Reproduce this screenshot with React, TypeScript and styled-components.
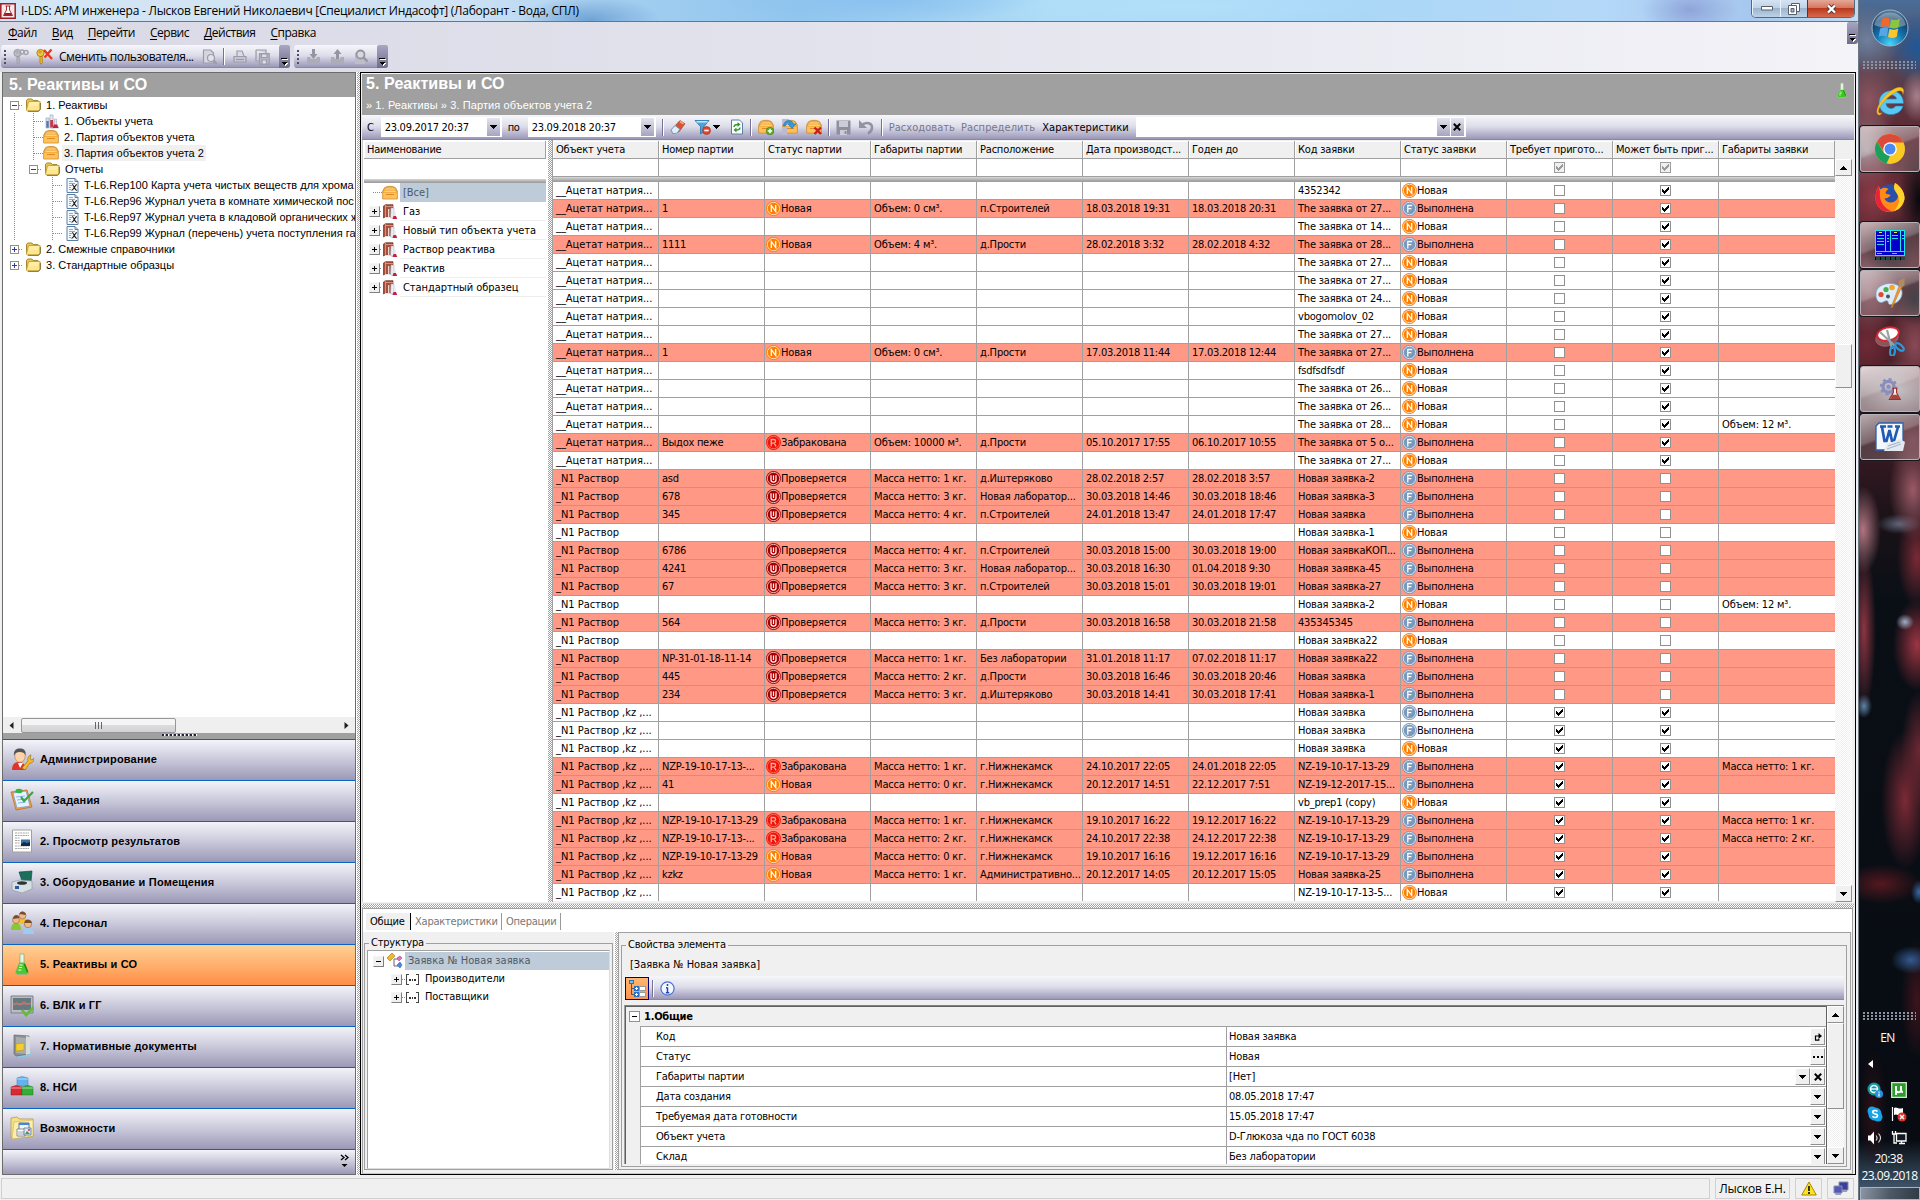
import React from "react";
import styled, { createGlobalStyle, css } from "styled-components";

const tahoma = `"DejaVu Sans Condensed", "DejaVu Sans", sans-serif`;
const sans = `"Liberation Sans", Arial, sans-serif`;
const segoe = `"Open Sans", "Noto Sans", sans-serif`;
const strip = "linear-gradient(#f6f6fb 0%, #dedeea 45%, #c3c2d7 65%, #9c99b8 95%, #7c7c94 100%)";
const checker = "repeating-conic-gradient(#a3a3a3 0 25%, #fff 0 50%) 0 0 / 2px 2px";

const Global = createGlobalStyle`
  html, body { margin: 0; padding: 0; background: #0a0f16; }
  * { box-sizing: border-box; }
  svg { display: block; flex: none; }
`;

const Desktop = styled.div`
  display: flex;
  width: 1920px;
  height: 1200px;
  overflow: hidden;
  font: 11px ${tahoma};
  font-stretch: condensed;
  letter-spacing: -0.26px;
  color: #000;
  white-space: nowrap;
  cursor: default;
`;
const Window = styled.div`
  display: flex;
  flex-direction: column;
  width: 1858px;
  height: 1200px;
  background: #f0f0f0;
`;

/* ---------- title, menu, tool strips ---------- */
const TitleBar = styled.header`
  display: flex;
  align-items: center;
  justify-content: space-between;
  height: 22px;
  padding-right: 3px;
  background:
    radial-gradient(ellipse 70px 24px at 590px 20px, #6fa3d6, transparent 100%),
    radial-gradient(ellipse 50px 26px at 1690px 10px, #8fa5da, transparent 100%),
    radial-gradient(ellipse 160px 24px at 880px 0, #8ac1ef, transparent 100%),
    radial-gradient(ellipse 200px 26px at 1180px 6px, #b2e0fa, transparent 100%),
    linear-gradient(90deg, #d4e6f5 0, #cfe2f4 460px, #a0cdf0 640px, #92c6ee 800px, #aedcf7 1050px, #a9d7f7 1300px, #b4d8f8 1600px, #a7c8ee 1750px, #c0dcf3 1858px);
  border-bottom: 1px solid #5b7a92;
`;
const TitleText = styled.div`
  display: flex;
  align-items: center;
  gap: 5px;
  height: 21px;
  font: 12px ${segoe};
  letter-spacing: -0.25px;
`;
const CaptionButtons = styled.div`
  display: flex;
  align-self: flex-start;
  height: 18px;
  border: 1px solid #53687c;
  border-top: 0;
  border-radius: 0 0 5px 5px;
  overflow: hidden;
`;
const CaptionButton = styled.div<{ $w: number; $close?: boolean }>`
  display: flex;
  align-items: center;
  justify-content: center;
  width: ${(p) => p.$w}px;
  border-left: 1px solid ${(p) => (p.$close ? "#6d2c2c" : "#e9f3fb")};
  background: ${(p) =>
    p.$close
      ? "linear-gradient(#e4a897 0, #d5775f 45%, #b93a1e 50%, #d8694c 100%)"
      : "linear-gradient(#d5e4f3 0, #c0d2e6 45%, #9cb4cd 50%, #bcd2e8 100%)"};
`;
const MenuBar = styled.nav`
  display: flex;
  justify-content: space-between;
  height: 22px;
  background: linear-gradient(90deg, #d9d9e6, #e4e4ee 50%, #f3f3f8);
`;
const MenuItems = styled.div`
  display: flex;
  gap: 15px;
  padding: 2px 0 0 8px;
  font: 12px/18px ${segoe};
  letter-spacing: -0.47px;
`;
const Accel = styled.span`
  text-decoration: underline;
  text-underline-offset: 2px;
`;
const Overflow = styled.div<{ $h?: number }>`
  display: flex;
  align-items: flex-end;
  justify-content: center;
  width: 11px;
  height: ${(p) => p.$h ?? 23}px;
  margin-left: auto;
  padding-bottom: 2px;
  border-radius: 2px 2px 3px 0;
  background: linear-gradient(#a9a6c2, #6f6c8e);
`;
const StripRow = styled.div`
  display: flex;
  gap: 4px;
  height: 28px;
  padding: 1px 0 0 1px;
  background: linear-gradient(90deg, #d9d9e6, #e4e4ee 50%, #f3f3f8);
`;
const Strip = styled.div<{ $w: number }>`
  display: flex;
  flex: none;
  align-items: center;
  width: ${(p) => p.$w}px;
  height: 23px;
  border-radius: 3px;
  background: ${strip};
`;
const Grip = styled.i`
  width: 2px;
  height: 14px;
  margin: 0 7px 0 3px;
  background: repeating-linear-gradient(#4e4c68 0 2px, transparent 2px 4px);
`;
const StripLabel = styled.span`
  margin: 0 8px 0 6px;
  font: 12px ${segoe};
  letter-spacing: -0.44px;
`;
const Divider = styled.i<{ $l?: number; $r?: number }>`
  width: 2px;
  height: 17px;
  margin: 0 ${(p) => p.$r ?? 6}px 0 ${(p) => p.$l ?? 6}px;
  border-left: 1px solid #73719a;
  border-right: 1px solid #fff;
`;
const Gap = styled.i<{ $w: number }>`
  flex: none;
  width: ${(p) => p.$w}px;
`;

/* ---------- left panel ---------- */
const Body = styled.main`
  display: flex;
  height: 1103px;
  padding-left: 2px;
`;
const LeftPanel = styled.aside`
  display: flex;
  flex-direction: column;
  width: 354px;
  height: 1103px;
  border: 1px solid #6b6b6b;
  background: #fff;
`;
const PanelTitle = styled.h1`
  margin: 0;
  height: 24px;
  padding-left: 6px;
  font: bold 16px/23px ${sans};
  letter-spacing: 0.05px;
  color: #fff;
  background: #a0a0a0;
`;
const NavTree = styled.div`
  height: 620px;
  overflow: hidden;
  font-family: ${sans};
  letter-spacing: 0.02px;
`;
const NavRow = styled.div<{ $indent: number }>`
  display: flex;
  align-items: center;
  height: 16px;
  padding-left: ${(p) => p.$indent}px;
`;
const NavLabel = styled.span<{ $on?: boolean }>`
  flex: 0 1 auto;
  min-width: 0;
  margin-left: 3px;
  padding: 0 2px;
  line-height: 16px;
  overflow: hidden;
  ${(p) => p.$on && css`background: #f0f0f0;`}
`;
const Expander = styled.i<{ $classic?: boolean }>`
  position: relative;
  flex: none;
  width: ${(p) => (p.$classic ? 11 : 9)}px;
  height: ${(p) => (p.$classic ? 11 : 9)}px;
  display: grid;
  place-items: center;
  background: ${(p) => (p.$classic ? "#f0f0f0" : "#fff")};
  border: 1px solid ${(p) => (p.$classic ? "#f4f4f4" : "#919191")};
  ${(p) => p.$classic && css`border-right-color: #808080; border-bottom-color: #808080;`}
`;
const Dash = styled.i<{ $w: number }>`
  flex: none;
  width: ${(p) => p.$w}px;
  height: 1px;
  background: repeating-linear-gradient(90deg, #8a8a8a 0 1px, transparent 1px 2px);
`;
const Rail = styled.i<{ $gap: number; $on?: boolean }>`
  flex: none;
  align-self: stretch;
  width: 1px;
  margin-right: ${(p) => p.$gap}px;
  background: ${(p) => (p.$on === false ? "none" : "repeating-linear-gradient(#8a8a8a 0 1px, transparent 1px 2px)")};
`;
const HScroll = styled.div`
  display: flex;
  align-items: center;
  height: 16px;
  padding: 0 6px;
  background: #efefef;
`;
const HThumb = styled.div`
  display: flex;
  align-items: center;
  justify-content: center;
  gap: 2px;
  width: 155px;
  height: 15px;
  margin: 0 auto 0 7px;
  border: 1px solid #979797;
  border-radius: 2px;
  background: linear-gradient(#f5f5f5 0 45%, #dcdcde 50%, #d2d2d4);
  i { width: 1px; height: 7px; background: #666; }
`;
const NavSplit = styled.div`
  display: flex;
  justify-content: center;
  height: 6px;
  padding-top: 1px;
  background: #a0a0a0;
  i { width: 35px; height: 2px; background: repeating-linear-gradient(90deg, #22243f 0 2px, #fff 2px 3px, transparent 3px 4px); }
`;
const NavButton = styled.div<{ $on?: boolean; $h?: number }>`
  display: flex;
  align-items: center;
  gap: 6px;
  height: ${(p) => p.$h ?? 41}px;
  padding: 0 7px 2px;
  border-top: 1px solid #0a62c4;
  font: bold 11px ${sans};
  letter-spacing: 0.18px;
  background: ${(p) => (p.$on ? "linear-gradient(#ffd194, #ff8e48)" : "linear-gradient(#f3f3f9, #c9c8da 50%, #9b98b6)")};
`;

/* ---------- main panel ---------- */
const VSplit = styled.i<{ $w: number }>`
  flex: none;
  width: ${(p) => p.$w}px;
  background: ${checker};
  border-left: 1px solid #fff;
`;
const MainPanel = styled.section`
  display: flex;
  flex-direction: column;
  width: 1496px;
  height: 1103px;
  padding: 1px 1px 0;
  border: 1px solid #000;
  background: #f0f0f0;
`;
const Banner = styled.div`
  display: flex;
  justify-content: space-between;
  height: 41px;
  padding: 0 7px 0 4px;
  color: #fff;
  background: #a0a0a0;
  h1 { margin: 0; font: bold 16px/19px ${sans}; letter-spacing: 0.08px; }
  p { margin: 0; font: 11px/25px ${sans}; letter-spacing: 0.1px; }
`;
const FilterBar = styled.div`
  display: flex;
  align-items: center;
  height: 25px;
  padding: 0 0 1px 5px;
  background: ${strip};
`;
const Combo = styled.div<{ $w: number }>`
  display: flex;
  align-items: center;
  width: ${(p) => p.$w}px;
  height: 20px;
  padding: 0 2px 0 4px;
  background: #fff;
`;
const DropBtn = styled.i<{ $first?: boolean }>`
  display: grid;
  place-items: center;
  width: 13px;
  height: 18px;
  margin-left: ${(p) => (p.$first ? "auto" : "1px")};
  background: linear-gradient(#e4e4ee, #a5a3bf);
`;
const Command = styled.span<{ $off?: boolean }>`
  letter-spacing: 0.05px;
  color: ${(p) => (p.$off ? "#77768c" : "#000")};
`;
const Upper = styled.div`
  display: flex;
  height: 762px;
`;
const NameGrid = styled.div`
  display: flex;
  flex-direction: column;
  width: 185px;
  padding: 1px 1px 0 1px;
  background: #fff;
  border-left: 1px solid #c8c8c8;
`;
const HeadCell = styled.div`
  height: 18px;
  padding-left: 3px;
  line-height: 18px;
  letter-spacing: -0.2px;
  overflow: hidden;
  background: #f0f0f0;
  border-bottom: 1px solid #a0a0a0;
  border-right: 1px solid #a0a0a0;
  box-shadow: inset 1px 1px 0 #fff;
`;
const Band = styled.div<{ $h: number }>`
  height: ${(p) => p.$h}px;
  background: linear-gradient(#d8d8d8, #a0a0a0 80%, #a0a0a0);
`;
const NameRow = styled.div`
  display: flex;
  align-items: center;
  height: 19px;
  padding-left: 5px;
`;
const NameLabel = styled.span<{ $on?: boolean }>`
  flex: 1;
  height: 19px;
  margin-left: 2px;
  padding-left: 3px;
  line-height: 19px;
  letter-spacing: -0.06px;
  border-bottom: 1px solid #eee;
  ${(p) => p.$on && css`background: #becbd9; color: #4c5a68; border-color: #becbd9;`}
`;
const Grid = styled.div`
  display: flex;
  width: 1302px;
  padding-top: 1px;
  border-left: 1px solid #a0a0a0;
  background: #f0f0f0;
`;
const GridBody = styled.div`
  width: 1282px;
  height: 760px;
  overflow: hidden;
  background: #fff;
`;
const Row = styled.div<{ $red?: boolean }>`
  display: grid;
  grid-template-columns: repeat(11, 106px) 116px;
  height: 18px;
  background: ${(p) => (p.$red ? "#ff9884" : "#fff")};
`;
const Cell = styled.div<{ $center?: boolean; $icon?: boolean; $last?: boolean; $track?: number }>`
  display: flex;
  align-items: center;
  justify-content: ${(p) => (p.$center ? "center" : "flex-start")};
  padding-left: ${(p) => (p.$center ? 0 : p.$icon ? 1 : 3)}px;
  line-height: 16px;
  letter-spacing: ${(p) => p.$track ?? -0.2}px;
  overflow: hidden;
  border-bottom: 1px solid #a0a0a0;
  border-right: ${(p) => (p.$last ? 0 : 1)}px solid #a0a0a0;
`;
const Check = styled.i<{ $off?: boolean }>`
  display: grid;
  place-items: center;
  width: 11px;
  height: 11px;
  border: 1px solid ${(p) => (p.$off ? "#9d9d9d" : "#909090")};
  background: ${(p) => (p.$off ? "#f0f0f0" : "#fff")};
`;
const ScrollCol = styled.div<{ $top: number }>`
  display: flex;
  flex-direction: column;
  width: 17px;
  margin-top: ${(p) => p.$top}px;
  background: repeating-conic-gradient(#f0f0f0 0 25%, #fff 0 50%) 0 0 / 2px 2px;
`;
const ScrollBtn = styled.i<{ $h?: number; $mt?: number }>`
  display: grid;
  place-items: center;
  flex: none;
  height: ${(p) => p.$h ?? 17}px;
  margin-top: ${(p) => (p.$mt === undefined ? 0 : p.$mt < 0 ? "auto" : p.$mt + "px")};
  background: #f0f0f0;
  border: 1px solid #fff;
  border-right-color: #909090;
  border-bottom-color: #909090;
`;
const HSplit = styled.div`
  height: 5px;
  margin-top: 1px;
  border-top: 1px solid #ddd;
  background: ${checker};
`;

/* ---------- lower panel ---------- */
const Lower = styled.div`
  display: flex;
  flex-direction: column;
  height: 266px;
  margin: 0 1px 0 0;
  border: 1px solid #a0a0a0;
  border-bottom-color: #c8c8c8;
`;
const Tabs = styled.div`
  display: flex;
  align-items: flex-start;
  height: 23px;
  padding: 4px 0 0 3px;
  background: #fff;
`;
const Tab = styled.div<{ $w: number; $on?: boolean }>`
  width: ${(p) => p.$w}px;
  height: 17px;
  padding-left: 4px;
  line-height: 17px;
  letter-spacing: -0.22px;
  color: ${(p) => (p.$on ? "#000" : "#777")};
  background: ${(p) => (p.$on ? "#f0f0f0" : "#fff")};
  border-right: 1px solid ${(p) => (p.$on ? "#000" : "#999")};
`;
const LowerRow = styled.div`
  display: flex;
  flex: 1;
  padding: 0 1px 3px 1px;
`;
const Group = styled.fieldset<{ $w: number; $mt: number; $h: number }>`
  width: ${(p) => p.$w}px;
  height: ${(p) => p.$h}px;
  min-width: 0;
  margin: ${(p) => p.$mt}px 0 0;
  padding: 0 2px 1px;
  border: 1px solid #a0a0a0;
  legend { margin-left: 2px; padding: 0 2px; line-height: 14px; letter-spacing: -0.2px; }
`;
const StructTree = styled.div`
  height: 219px;
  padding: 1px 0 0;
  background: #fff;
  border: 1px solid #a0a0a0;
  border-right-color: #ddd;
  border-bottom-color: #ddd;
`;
const StructRow = styled.div<{ $pl: number }>`
  display: flex;
  align-items: center;
  height: 18px;
  padding-left: ${(p) => p.$pl}px;
`;
const StructLabel = styled.span<{ $on?: boolean }>`
  flex: 1;
  margin-left: 2px;
  padding-left: 3px;
  line-height: 18px;
  letter-spacing: ${(p) => (p.$on ? 0 : -0.1)}px;
  ${(p) => p.$on && css`background: #becbd9; color: #4c5a68;`}
`;
const PropsBox = styled.div`
  width: 1233px;
  height: 238px;
  padding: 5px 3px 0 2px;
  border: 1px solid #a0a0a0;
`;
const PropsCaption = styled.div`
  height: 24px;
  padding-left: 6px;
  line-height: 26px;
  letter-spacing: 0;
`;
const PropsBar = styled.div`
  display: flex;
  align-items: center;
  height: 24px;
  margin-left: 1px;
  background: ${strip};
`;
const PropsToggle = styled.i`
  display: grid;
  place-items: center;
  width: 24px;
  height: 23px;
  border: 1px solid #000080;
  background: linear-gradient(#ffb870, #fe9350);
`;
const PropsGrid = styled.div`
  display: flex;
  height: 159px;
  margin-top: 5px;
  overflow: hidden;
  border-top: 1px solid #808080;
  border-left: 1px solid #a0a0a0;
`;
const PropsTable = styled.div`
  width: 1202px;
  padding-left: 14px;
  overflow: hidden;
  background: #f0f0f0;
  border-left: 1px solid #606060;
  border-top: 1px solid #606060;
  border-right: 1px solid #606060;
`;
const Category = styled.div`
  display: flex;
  align-items: center;
  gap: 4px;
  height: 19px;
  margin-left: -11px;
  font-weight: bold;
`;
const Prop = styled.div`
  display: grid;
  grid-template-columns: 586px 1fr;
  height: 20px;
  line-height: 19px;
  background: #fff;
  border-top: 1px solid #a0a0a0;
  border-left: 1px solid #a0a0a0;
`;
const PropName = styled.div`
  padding-left: 15px;
  letter-spacing: -0.2px;
  border-right: 1px solid #a0a0a0;
`;
const PropValue = styled.div`
  display: flex;
  padding: 1px 1px 0 2px;
  letter-spacing: -0.18px;
  span { flex: 1; line-height: 17px; }
`;
const PropBtn = styled.i`
  display: grid;
  place-items: center;
  width: 15px;
  height: 17px;
  background: #f0f0f0;
  border: 1px solid #fff;
  border-right-color: #909090;
  border-bottom-color: #909090;
`;

/* ---------- status bar ---------- */
const StatusBar = styled.footer`
  display: flex;
  gap: 5px;
  height: 25px;
  padding: 3px 1px 1px;
`;
const StatusPane = styled.div<{ $w: number }>`
  display: flex;
  align-items: center;
  justify-content: center;
  width: ${(p) => p.$w}px;
  height: 21px;
  border: 1px solid #d0d0d0;
  font: 12px ${segoe};
  letter-spacing: -0.2px;
`;

/* ---------- system task bar ---------- */
const TaskBar = styled.aside`
  display: flex;
  flex-direction: column;
  align-items: center;
  width: 62px;
  height: 1200px;
  border-left: 1px solid #6a7683;
  font-family: ${segoe};
  color: #fff;
  background:
    radial-gradient(ellipse 16px 26px at 58px 96px, #a8808c, transparent),
    radial-gradient(ellipse 30px 36px at 58px 48px, #1f5797, transparent),
    radial-gradient(ellipse 34px 34px at 8px 40px, #6f7f9c, transparent),
    radial-gradient(ellipse 30px 40px at 10px 100px, #8c5560, transparent),
    radial-gradient(ellipse 20px 60px at 60px 200px, #07090e, #07090e55 60%, transparent),
    radial-gradient(ellipse 34px 46px at 14px 196px, #8c3a46, transparent),
    radial-gradient(ellipse 30px 40px at 8px 150px, #9c8a92, transparent),
    radial-gradient(ellipse 26px 34px at 30px 245px, #15171d, transparent),
    radial-gradient(ellipse 30px 44px at 10px 290px, #8b5a66, transparent),
    radial-gradient(ellipse 20px 26px at 56px 300px, #1c1a22, transparent),
    radial-gradient(ellipse 26px 50px at 56px 345px, #8a4a56, transparent),
    radial-gradient(ellipse 30px 40px at 8px 345px, #702a36, transparent),
    radial-gradient(ellipse 40px 30px at 40px 390px, #8a7e86, transparent),
    radial-gradient(ellipse 30px 34px at 54px 440px, #6d3540, transparent),
    radial-gradient(ellipse 24px 50px at 54px 490px, #9a5a66, transparent),
    radial-gradient(ellipse 18px 44px at 4px 530px, #b07580, transparent),
    radial-gradient(ellipse 22px 10px at 40px 524px, #5e6678, transparent),
    radial-gradient(ellipse 20px 50px at 58px 558px, #7a2a36, transparent),
    radial-gradient(ellipse 12px 80px at 5px 630px, #8c3542, transparent),
    radial-gradient(ellipse 9px 8px at 46px 622px, #a0b0c8, transparent),
    radial-gradient(ellipse 24px 46px at 58px 645px, #9c3644, #7a2a36aa 50%, transparent),
    radial-gradient(ellipse 8px 12px at 5px 706px, #5f86a8, transparent),
    radial-gradient(ellipse 24px 70px at 46px 800px, #7c2a36, transparent),
    radial-gradient(ellipse 18px 60px at 60px 750px, #6a2833, transparent),
    radial-gradient(ellipse 40px 20px at 22px 884px, #541820, transparent),
    radial-gradient(ellipse 8px 12px at 60px 892px, #3a6aa8, transparent),
    radial-gradient(ellipse 20px 14px at 52px 960px, #335a90, transparent),
    radial-gradient(ellipse 16px 60px at 58px 1000px, #3e141d, transparent),
    radial-gradient(ellipse 14px 60px at 14px 1110px, #2c1016, transparent),
    linear-gradient(#4a6d98 0, #58404c 76px, #5c2a34 130px, #4a2028 330px, #381a22 450px, #1a1218 520px, #0a0f16 600px, #080c12 1140px, #3c5266 1186px);
`;
const Dots = styled.i`
  width: 53px;
  height: 9px;
  flex: none;
  background: radial-gradient(circle at 1px 1px, #8c93a0 0 1px, transparent 1.2px) 0 0 / 4px 3px;
`;
const Slot = styled.div<{ $open?: boolean; $active?: boolean; $h?: number }>`
  display: grid;
  place-items: center;
  flex: none;
  width: 60px;
  height: ${(p) => p.$h ?? 46}px;
  margin-bottom: 2px;
  ${(p) =>
    p.$open &&
    css`
      border: 1px solid #b9b3b8;
      border-radius: 3px;
      box-shadow: 0 0 0 1px #15171c;
      background: linear-gradient(160deg, #ffffffa0, #ffffff55 45%, #ffffff26 50%, #ffffff33);
    `}
  ${(p) => p.$active && css`background: linear-gradient(160deg, #ffffffd0, #ffffff99 45%, #ffffff80 50%, #ffffff70);`}
`;
const Tray = styled.div`
  display: grid;
  grid-template-columns: 24px 24px;
  grid-auto-rows: 24px;
  place-items: center;
  width: 54px;
`;
const TrayText = styled.div<{ $h: number; $shift?: number }>`
  height: ${(p) => p.$h}px;
  padding-right: ${(p) => p.$shift ?? 0}px;
  font: 12px/${(p) => p.$h}px ${segoe};
  letter-spacing: -0.5px;
`;
const TrayArrow = styled.div`
  align-self: flex-start;
  display: flex;
  align-items: center;
  height: 29px;
  padding-left: 9px;
`;
const ShowDesktop = styled.div`
  width: 60px;
  height: 13px;
  margin-top: auto;
  border: 1px solid #a8b4c0;
  background: linear-gradient(100deg, #8a96a4, #4c5866 50%, #2f3a46);
`;

/* ---------- small glyphs ---------- */
const Caret = ({ up, c = "#000" }: { up?: boolean; c?: string }) => (
  <svg width="7" height="4" shapeRendering="crispEdges"><path d={up ? "M3 0h1v1h1v1h1v1h1v1H0V3h1V2h1V1h1z" : "M0 0h7v1H6v1H5v1H4v1H3V3H2V2H1V1H0z"} fill={c} /></svg>
);
const OverflowMark = () => (
  <svg width="7" height="8" shapeRendering="crispEdges"><path d="M1 1h6v1H1zM1 5h6L4 8z" fill="#fff" /><path d="M0 0h6v1H0zM0 4h6L3 7z" fill="#000" /></svg>
);
const Cross = ({ s = 7 }: { s?: number }) => (
  <svg width={s} height={s} viewBox="0 0 7 7"><path d="M.7.7l5.6 5.6M6.3.7L.7 6.3" stroke="#000" strokeWidth="1.7" /></svg>
);
const Tick = ({ c = "#000" }: { c?: string }) => (
  <svg width="7" height="7" viewBox="0 0 7 7" shapeRendering="crispEdges"><path d="M0 2h1v1h1v1h1V3h1V2h1V1h1V0h1v3H6v1H5v1H4v1H3v1H2V6H1V5H0z" fill={c} /></svg>
);
const PlusMinus = ({ plus, c = "#000" }: { plus?: boolean; c?: string }) => (
  <svg width="5" height="5" shapeRendering="crispEdges"><path d={plus ? "M0 2h5v1H0zM2 0h1v5H2z" : "M0 2h5v1H0z"} fill={c} /></svg>
);

const Badge = ({ k }: { k: string }) => {
  const c: Record<string, string> = { N: "#ff7f00", F: "#7898bc", R: "#f01408", U: "#a80000" };
  const d: Record<string, string> = {
    N: "M5.300 11V4.600l4.400 5.800V4",
    F: "M5.800 11.500V4.500H10.200M5.800 7.700h3.600",
    R: "M5.200 11.300V4.500h2.600a1.800 1.800 0 010 3.600H5.200M8 8l2.100 3.300",
    U: "M5 4.300v4.700c0 2.700 5 2.700 5 0V4.300M7.500 4.500v4.500",
  };
  return (
    <svg width="15" height="15" viewBox="0 0 15 15">
      <circle cx="7.500" cy="7.500" r="7.400" fill={c[k]} />
      <circle cx="7.500" cy="7.500" r="6.200" fill="none" stroke={k === "R" ? "#ff8d78" : "#fff"} strokeWidth=".7" />
      <path d={d[k]} fill="none" stroke={k === "R" ? "#ffa899" : "#fff"} strokeWidth={k === "U" ? 1.2 : 1.3} />
    </svg>
  );
};

const Folder = () => (
  <svg width="16" height="14" viewBox="0 0 16 14">
    <path d="M1.5 12V2.2L3 1h4l1.2 1.5H13V4" fill="#e9c64d" stroke="#a58a34" />
    <path d="M3.500 3.500h11.600v7.800L13.800 13H2.300L1.500 12z" fill="#ffe68c" stroke="#c9a63c" />
    <path d="M4.500 5h9.500M4 7h9" stroke="#fff6c8" />
    <path d="M3 13.300h10.500L15.300 11.200V5" fill="none" stroke="#5f511e" strokeWidth=".8" />
  </svg>
);
const Box = ({ mark }: { mark?: "add" | "move" | "del" }) => (
  <svg width="16" height="16" viewBox="0 0 16 16">
    <path d="M.7 6l2-3.400 3-1.200h4.600l3 1.200 2 3.400v8H.7z" fill="#f3ae42" stroke="#c98526" strokeWidth=".8" />
    <path d="M3.500 4h9M2.500 6.300h11" stroke="#fbd587" strokeWidth="1.200" />
    <path d="M1.200 8h13.600v5.500H1.200z" fill="#fcc05c" />
    <path d="M4 9.500h8" stroke="#df8a25" />
    {mark === "add" && <g><circle cx="12" cy="12" r="3.800" fill="#5faf2e" stroke="#397a16" strokeWidth=".6" /><path d="M12 9.800v4.400M9.800 12h4.400" stroke="#fff" strokeWidth="1.400" /></g>}
    {mark === "move" && <g><path d="M0 0h7v6H0zM0 8h5v8H0z" fill="#bcbad1" /><path d="M1.500 7c0-6 8-7.500 10-2h2.500l-4 4.500-4-4.500h2.300c-1-2-4-1.500-4.800 2z" fill="#3799d8" stroke="#1b6fa8" strokeWidth=".6" /></g>}
    {mark === "del" && <path d="M8.500 8.500l6.500 6.500M15 8.500L8.500 15" stroke="#c51d1d" strokeWidth="2.300" />}
  </svg>
);
const Vials = () => (
  <svg width="14" height="15" viewBox="0 0 14 15">
    <path d="M1 4h3v10H1z" fill="#d7e3ef" stroke="#8aa0b8" strokeWidth=".6" /><path d="M1.300 7h2.400v6.700H1.300z" fill="#5b79a8" />
    <path d="M5 1h3l.5 13H5z" fill="#e4e9f1" stroke="#8aa0b8" strokeWidth=".6" /><path d="M5.200 6h2.800v7.500H5.200z" fill="#c53a4a" />
    <path d="M9.500 5v4L7.500 14h6l-2-5V5z" fill="#dfe6ee" stroke="#99a" strokeWidth=".5" /><path d="M9 10.500L7.600 14h5.900L12 10.500z" fill="#c8203c" />
  </svg>
);
const Report = () => (
  <svg width="13" height="15" viewBox="0 0 13 15">
    <path d="M1 .5h8l3 3v11H1z" fill="#f5f8fc" stroke="#5a7fa6" /><path d="M9 .5v3h3" fill="none" stroke="#5a7fa6" />
    <path d="M3 3.500h4M3 5.500h6M3 7.500h3M3 9.500h2M3 11.500h2" stroke="#8d9cae" strokeWidth=".9" />
    <path d="M6 6.500c2 0 2.500 6 5 6M11 6.500c-2 0-3.500 6-5.500 6" fill="none" stroke="#222" strokeWidth="1.200" />
  </svg>
);
const Book = () => (
  <svg width="16" height="16" viewBox="0 0 16 16">
    <path d="M1.500 2L3.500.7H11v12H3.500L1.500 14z" fill="#a4503c" stroke="#6b2c20" strokeWidth=".7" /><path d="M3.500 2.500H11M3.500.7V13" stroke="#d8917e" />
    <path d="M6 5h1.300v8H6z" fill="#f4d4cb" /><path d="M9 4h3v10H8.500z" fill="#eaeef4" stroke="#9ab" strokeWidth=".5" />
    <path d="M12.500 8v3L10.700 15H15l-1.300-4V8z" fill="#e6e9ee" /><path d="M11.500 12L10.500 15h4.700L14 12z" fill="#c8203c" />
  </svg>
);
const Flask = ({ w, h }: { w: number; h: number }) => (
  <svg width={w} height={h} viewBox="0 0 14 22">
    <path d="M5 1h4v8l4 9.500c.6 1.800-.3 3-2 3H3c-1.700 0-2.600-1.200-2-3L5 9z" fill="#e9f5e6" stroke="#8aa88a" strokeWidth=".5" />
    <path d="M4.300 10.500h5.400l3.200 8c.5 1.700-.4 2.600-2 2.600H3c-1.500 0-2.500-1-2-2.600z" fill="#3cc81e" />
    <path d="M4 14h3M3.300 16h3M2.700 18h3" stroke="#fff" strokeWidth=".8" /><path d="M9 11l3 8" stroke="#1d8a0d" strokeWidth="1.200" /><path d="M4.600 1h4.800" stroke="#999" />
  </svg>
);

const Key = ({ gray }: { gray?: boolean }) => (
  <svg width="17" height="17" viewBox="0 0 17 17">
    <g fill="none" stroke={gray ? "#9b9ba6" : "#b5850f"} strokeWidth="1">
      <circle cx="4.500" cy="5" r="3.600" fill={gray ? "#bcbcc6" : "#f2c634"} /><path d="M4 8.500h2.200V15l-1 1.300L4 15z" fill={gray ? "#bcbcc6" : "#f2c634"} />
      <circle cx="4" cy="4" r="1" fill="#fff" />
    </g>
    {gray ? <g fill="none" stroke="#a4a4ae" strokeWidth="1.500"><circle cx="9" cy="4" r="2" /><circle cx="13" cy="4.500" r="2" /></g>
      : <path d="M8 2l8 9M15.500 1.500L8.500 9.500" stroke="#e8391c" strokeWidth="2.300" />}
  </svg>
);
const grayStroke = { fill: "none", stroke: "#9b9bab", strokeWidth: 1.2 };
const PreviewIcon = () => (
  <svg width="16" height="16" viewBox="0 0 16 16" {...grayStroke}><path d="M1.500 1h7l3 3v10h-10z" fill="#d6d6e0" /><circle cx="9" cy="9" r="3.500" fill="#e2e2ea" /><path d="M11.500 11.500l3 3.500" strokeWidth="2.200" /></svg>
);
const PrinterIcon = () => (
  <svg width="14" height="14" viewBox="0 0 14 14" {...grayStroke}><path d="M4 6V1h5l2 5" fill="#dcdce6" /><path d="M1 6.500h12V12H1z" fill="#c8c8d4" /><path d="M3 9.500h8" /></svg>
);
const SaveAllIcon = () => (
  <svg width="15" height="16" viewBox="0 0 15 16" {...grayStroke}><path d="M1 1h10v3M1 1v11h3" fill="#d0d0dc" /><path d="M4.500 4.500h9.700v10.700H4.500z" fill="#b7b7c5" /><path d="M6.500 5h5.500v3.500H6.500zM7 11h4.500v4H7z" fill="#dedee8" /></svg>
);
const InOut = ({ up }: { up?: boolean }) => (
  <svg width="15" height="16" viewBox="0 0 15 16"><path d="M1 8h3l1 2h5l1-2h3v7H1z" fill="#adadb9" />{up ? <path d="M7.500 0l4 5H9v5H6V5H3.500z" fill="#9595a2" /> : <path d="M6 0h3v5h2.500l-4 5-4-5H6z" fill="#9595a2" />}</svg>
);
const FindIcon = () => (
  <svg width="15" height="15" viewBox="0 0 15 15"><path d="M1 4h10v11H1z" fill="#bdbdca" /><circle cx="6.500" cy="5.500" r="4" fill="#d8d8e2" stroke="#9595a2" strokeWidth="1.800" /><path d="M9.500 8.500l4 4" stroke="#9595a2" strokeWidth="2.400" /></svg>
);
const Eraser = () => (
  <svg width="16" height="16" viewBox="0 0 16 16"><path d="M10 1.500l5 3.300-6 8-6 1.700L1 11z" fill="#d8542f" stroke="#8f3e28" strokeWidth=".6" /><path d="M1 11l4-4.500 4.800 3.800L7 14.200 3 14.500z" fill="#dfeefb" stroke="#7594b5" strokeWidth=".8" /><path d="M10 2.500l3.500 2.300" stroke="#ffab8c" strokeWidth="1.500" /></svg>
);
const Funnel = () => (
  <svg width="17" height="16" viewBox="0 0 17 16"><path d="M1 1.500h14l-5 6v5l-3.500 2.500V7.500z" fill="#4ea3da" stroke="#1f72ac" strokeWidth=".8" /><path d="M2.500 2.800h11" stroke="#c9e8fa" strokeWidth="1.500" /><circle cx="12.500" cy="11.500" r="4" fill="#e5452a" stroke="#a82a14" strokeWidth=".6" /><path d="M10.300 11.500h4.400" stroke="#fff" strokeWidth="1.600" /></svg>
);
const Refresh = () => (
  <svg width="14" height="16" viewBox="0 0 14 16"><path d="M1.500 1h8l3 3v11h-11z" fill="#fff" stroke="#5a7fa6" /><path d="M4 8c0-2 1.500-2.500 4-2.500M10 8.500c0 2-1.500 2.500-4 2.500" fill="none" stroke="#2f9a2a" strokeWidth="1.400" /><path d="M7.500 3l3 2.500-3 2.500zM6.500 8.500v5L3.500 11z" fill="#2f9a2a" /></svg>
);
const Floppy = () => (
  <svg width="15" height="15" viewBox="0 0 15 15"><path d="M.5.500h14v14H.5z" fill="#8f8fa0" /><path d="M3 1h9v6H3zM4 10h7v5H4z" fill="#ccccd8" /><path d="M8.500 11h2v3h-2z" fill="#8f8fa0" /></svg>
);
const Undo = () => (
  <svg width="17" height="15" viewBox="0 0 17 15"><path d="M3.500 5.500C8 1 14.500 3 14 8c-.2 2.500-2 4.500-4 5.500" fill="none" stroke="#9292a2" strokeWidth="2.600" /><path d="M1 0v8h8z" fill="#9292a2" /></svg>
);

/* ---------- section icons, 24px ---------- */
const S = ({ children }: { children: React.ReactNode }) => <svg width="24" height="24" viewBox="0 0 24 24">{children}</svg>;
const sectionIcons: Record<string, React.ReactNode> = {
  admin: <S><path d="M2 23c0-5 2-8 7-8s6 3 7 8z" fill="#df3429" /><path d="M8 16l2 5 3-5z" fill="#fff" /><ellipse cx="10" cy="9" rx="5.200" ry="6.300" fill="#ffd3a8" stroke="#99694a" strokeWidth=".5" /><path d="M4 9C3 2 8 1 11 1.500c4 .5 5 3 4.600 7-1-3-3-3.500-6-3.500S5 6 4 9z" fill="#515559" /><path d="M12 21l6-7c-1-3 1-6 3-6l-1 4 2 1 2-2c0 4-2 5-4 5l-5 7z" fill="#f4bd28" stroke="#a5770f" strokeWidth=".7" /></S>,
  tasks: <S><path d="M1 4l16-2 5 17-16 3z" fill="#f1a23d" stroke="#b56a1d" strokeWidth=".7" /><path d="M3 5l13-2 4 15-13 2z" fill="#e7f2ff" stroke="#6f97cc" strokeWidth=".7" /><path d="M6 9l9-1M7 12l8-1M8 15l8-1" stroke="#8cb4e8" /><ellipse cx="9" cy="3" rx="3.500" ry="2.200" fill="#34b546" /><path d="M11 9l3 4 9-9" fill="none" stroke="#38a93a" strokeWidth="2.200" /></S>,
  results: <S><path d="M2.500 1h19v22h-19z" fill="#fff" stroke="#a0a0a0" /><path d="M5 4h14M5 6.500h14M5 9h5M5 11.500h5M5 14h5M5 17h14M5 19.500h14" stroke="#a8a8a8" strokeWidth="1.200" strokeDasharray="2 .6" /><path d="M11 10.500h9V17h-9z" fill="#3f6ea0" /><path d="M11 15l3-2 3 1 3-1v4h-9z" fill="#132c4e" /></S>,
  equip: <S><path d="M9 2l13-1-1 11-9-1z" fill="#1e6e5c" stroke="#0f4338" strokeWidth=".6" /><path d="M2 12l8-2 12 1v8l-10 4-10-3z" fill="#d6dfe2" stroke="#8896a0" strokeWidth=".6" /><ellipse cx="12" cy="13" rx="5" ry="1.800" fill="#2a3638" /><path d="M5 16h4v3H5z" fill="#2e5aa0" /></S>,
  staff: <S><path d="M1 19c0-5 2-7 5-7s5 2 5 7z" fill="#88c832" /><path d="M8 13c0-5 2-6 5-6s5 2 5 6z" fill="#f4c02b" /><path d="M13 23c0-5 2-6 5-6s6 2 6 6z" fill="#9dccf2" /><g fill="#f0b78a" stroke="#7d5330" strokeWidth=".5"><circle cx="6" cy="9" r="3.500" /><circle cx="12.500" cy="4.500" r="3.500" /><circle cx="18" cy="13" r="3.700" /></g><path d="M3 8c0-5 6-5 6.500-1zM9.500 3c1-4 6-3 6.500 1zM14.500 12c0-5 7-4 7.500 0z" fill="#75502d" /></S>,
  reag: <S><g transform="translate(5 1)"><path d="M5 1h4v8l4 9.500c.6 1.800-.3 3-2 3H3c-1.700 0-2.600-1.200-2-3L5 9z" fill="#e9f5e6" stroke="#6fa06f" strokeWidth=".6" /><path d="M4.500 9.500h5l3.700 9c.5 1.700-.6 2.600-2.200 2.600H3c-1.500 0-2.500-1-2-2.600z" fill="#4bc832" /><path d="M4.500 12h3M4 14.500h3M3.300 17h3" stroke="#e9ffe0" /><path d="M9.500 11l3 8" stroke="#1d8a0d" strokeWidth="1.500" /></g></S>,
  qc: <S><path d="M1 3h22v17H1z" fill="#b9bdc2" stroke="#7c8188" /><path d="M3 5h18v12H3z" fill="#667a7d" /><path d="M3 11h18" stroke="#97a8aa" strokeWidth=".6" /><path d="M3 12l4-2 3 2 4-3 3 2 4-1" fill="none" stroke="#e06a6a" strokeWidth="1.200" /><path d="M12 17l4 5 8-8" fill="none" stroke="#65bb3a" strokeWidth="2.800" /></S>,
  docs: <S><path d="M5 20l3 3 13-1v-3z" fill="#79d1f2" /><path d="M4 1l15 1v18l-13 2-2-2z" fill="#8e9193" stroke="#5b5d5f" strokeWidth=".6" /><path d="M16 2l4 1v17l-4 1z" fill="#d8dada" /><path d="M6 3l10 1v16L6 19z" fill="#a9acad" /><path d="M6 10l8-1v7l-8 1z" fill="#f3d02a" stroke="#b79512" strokeWidth=".5" /></S>,
  nsi: <S><path d="M7 3l5-1.500L18 3v8H7z" fill="#64b1ef" stroke="#2f7cc2" strokeWidth=".5" /><path d="M1 12l5-1.500 6 1.500v8H1z" fill="#d82a32" stroke="#901219" strokeWidth=".5" /><path d="M12 12l6-1.500 5 1.500v8H12z" fill="#36ad37" stroke="#1e761f" strokeWidth=".5" /><path d="M7 4h11M1 13h11M12 13h11" stroke="#ffffff88" /></S>,
  poss: <S><path d="M1 22V2l6-1 2 2h14v17l-3 1z" fill="#f5df82" stroke="#b39431" strokeWidth=".7" /><path d="M4 6l19-2v16L2 23z" fill="#fbeeb0" stroke="#c7a845" strokeWidth=".5" /><path d="M9 7h10v7H9z" fill="#f2f7ff" stroke="#5576a8" /><path d="M9 7h10v2H9z" fill="#4d83d6" /><path d="M7 13h8v7H7z" fill="#fff" stroke="#607394" strokeWidth=".8" /><path d="M8.500 16h5.500M8.500 18h5.500" stroke="#345" strokeDasharray="1 1" /><path d="M14 12h7v7h-7z" fill="#d8e7f4" stroke="#607394" strokeWidth=".8" /><path d="M15 18l2-3 3 3z" fill="#4a9a50" /><circle cx="19" cy="14" r="1" fill="#d33" /></S>,
};
const sections: [string, string][] = [
  ["admin", "Администрирование"], ["tasks", "1. Задания"], ["results", "2. Просмотр результатов"],
  ["equip", "3. Оборудование и Помещения"], ["staff", "4. Персонал"], ["reag", "5. Реактивы и СО"],
  ["qc", "6. ВЛК и ГГ"], ["docs", "7. Нормативные документы"], ["nsi", "8. НСИ"], ["poss", "Возможности"],
];

/* ---------- grid data ---------- */
type Rec = [string, string, string, string, string, string, string, string, string, 0 | 1, 0 | 1, string];
const A = "__Ацетат натрия...";
const P = "_N1 Раствор";
const K = "_N1 Раствор ,kz ,...";
const req = (o: string, code: string, st: string, a: 0 | 1, b: 0 | 1, g = ""): Rec => [o, "", "", "", "", "", "", code, st, a, b, g];
const kg = (n: number) => `Масса нетто: ${n} кг.`;
const z = (s: string) => `The заявка от ${s}...`;
const NZ = "NZ-19-10-17-13-29";
const records: Rec[] = [
  req(A, "4352342", "N", 0, 1),
  [A, "1", "N", "Объем: 0 см³.", "п.Строителей", "18.03.2018 19:31", "18.03.2018 20:31", z("27"), "F", 0, 1, ""],
  req(A, z("14"), "N", 0, 1),
  [A, "1111", "N", "Объем: 4 м³.", "д.Прости", "28.02.2018 3:32", "28.02.2018 4:32", z("28"), "F", 0, 1, ""],
  req(A, z("27"), "N", 0, 1),
  req(A, z("27"), "N", 0, 1),
  req(A, z("24"), "N", 0, 1),
  req(A, "vbogomolov_02", "N", 0, 1),
  req(A, z("27"), "N", 0, 1),
  [A, "1", "N", "Объем: 0 см³.", "д.Прости", "17.03.2018 11:44", "17.03.2018 12:44", z("27"), "F", 0, 1, ""],
  req(A, "fsdfsdfsdf", "N", 0, 1),
  req(A, z("26"), "N", 0, 1),
  req(A, z("26"), "N", 0, 1),
  req(A, z("28"), "N", 0, 1, "Объем: 12 м³."),
  [A, "Выдох пеже", "R", "Объем: 10000 м³.", "д.Прости", "05.10.2017 17:55", "06.10.2017 10:55", z("5 о"), "F", 0, 1, ""],
  req(A, z("27"), "N", 0, 1),
  [P, "asd", "U", kg(1), "д.Иштеряково", "28.02.2018 2:57", "28.02.2018 3:57", "Новая заявка-2", "F", 0, 0, ""],
  [P, "678", "U", kg(3), "Новая лаборатор...", "30.03.2018 14:46", "30.03.2018 18:46", "Новая заявка-3", "F", 0, 0, ""],
  [P, "345", "U", kg(4), "п.Строителей", "24.01.2018 13:47", "24.01.2018 17:47", "Новая заявка", "F", 0, 0, ""],
  req(P, "Новая заявка-1", "N", 0, 0),
  [P, "6786", "U", kg(4), "п.Строителей", "30.03.2018 15:00", "30.03.2018 19:00", "Новая заявкаКОП...", "F", 0, 0, ""],
  [P, "4241", "U", kg(3), "Новая лаборатор...", "30.03.2018 16:30", "01.04.2018 9:30", "Новая заявка-45", "F", 0, 0, ""],
  [P, "67", "U", kg(3), "п.Строителей", "30.03.2018 15:01", "30.03.2018 19:01", "Новая заявка-27", "F", 0, 0, ""],
  req(P, "Новая заявка-2", "N", 0, 0, "Объем: 12 м³."),
  [P, "564", "U", kg(3), "д.Прости", "30.03.2018 16:58", "30.03.2018 21:58", "435345345", "F", 0, 0, ""],
  req(P, "Новая заявка22", "N", 0, 0),
  [P, "NP-31-01-18-11-14", "U", kg(1), "Без лаборатории", "31.01.2018 11:17", "07.02.2018 11:17", "Новая заявка22", "F", 0, 0, ""],
  [P, "445", "U", kg(2), "д.Прости", "30.03.2018 16:46", "30.03.2018 20:46", "Новая заявка", "F", 0, 0, ""],
  [P, "234", "U", kg(3), "д.Иштеряково", "30.03.2018 14:41", "30.03.2018 17:41", "Новая заявка-1", "F", 0, 0, ""],
  req(K, "Новая заявка", "F", 1, 1),
  req(K, "Новая заявка", "F", 1, 1),
  req(K, "Новая заявка", "N", 1, 1),
  [K, "NZP-19-10-17-13-...", "R", kg(1), "г.Нижнекамск", "24.10.2017 22:05", "24.01.2018 22:05", NZ, "F", 1, 1, kg(1)],
  [K, "41", "N", kg(0), "г.Нижнекамск", "20.12.2017 14:51", "22.12.2017 7:51", "NZ-19-12-2017-15...", "F", 1, 1, ""],
  req(K, "vb_prep1 (copy)", "N", 1, 1),
  [K, "NZP-19-10-17-13-29", "R", kg(1), "г.Нижнекамск", "19.10.2017 16:22", "19.12.2017 16:22", NZ, "F", 1, 1, kg(1)],
  [K, "NZP-19-10-17-13-...", "R", kg(2), "г.Нижнекамск", "24.10.2017 22:38", "24.12.2017 22:38", NZ, "F", 1, 1, kg(2)],
  [K, "NZP-19-10-17-13-29", "N", kg(0), "г.Нижнекамск", "19.10.2017 16:16", "19.12.2017 16:16", NZ, "F", 1, 1, ""],
  [K, "kzkz", "N", kg(1), "Административно...", "20.12.2017 14:05", "20.12.2017 15:05", "Новая заявка-25", "F", 1, 1, ""],
  req(K, "NZ-19-10-17-13-5...", "N", 1, 1),
];
const columns = ["Объект учета", "Номер партии", "Статус партии", "Габариты партии", "Расположение", "Дата производст...", "Годен до", "Код заявки", "Статус заявки", "Требует пригото...", "Может быть приг...", "Габариты заявки"];
const tracking = [-0.02, -0.27, -0.18, -0.16, -0.18, -0.27, -0.27, -0.2, -0.22, 0, 0, -0.16];
const lotStatus: Record<string, string> = { N: "Новая", R: "Забракована", U: "Проверяется", F: "Выполнена" };

const DataRow = ({ r }: { r: Rec }) => (
  <Row $red={!!r[1]}>
    {r.map((v, i) => {
      if (i === 2 || i === 8) return <Cell key={i} $icon $track={tracking[i]}>{v && <><Badge k={v as string} />{lotStatus[v as string]}</>}</Cell>;
      if (i === 9 || i === 10) return <Cell key={i} $center><Check>{v ? <Tick /> : null}</Check></Cell>;
      return <Cell key={i} $last={i === 11} $track={tracking[i]}>{v}</Cell>;
    })}
  </Row>
);

const MenuEntry = ({ t }: { t: string }) => <span><Accel>{t[0]}</Accel>{t.slice(1)}</span>;

const Toggle = ({ plus, classic }: { plus?: boolean; classic?: boolean }) => (
  <Expander $classic={classic}><PlusMinus plus={plus} c={classic ? "#000" : "#2b3c9b"} /></Expander>
);

const reports = [
  "T-L6.Rep100 Карта учета чистых веществ для хрома",
  "T-L6.Rep96 Журнал учета в комнате химической пос",
  "T-L6.Rep97 Журнал учета в кладовой органических ж",
  "T-L6.Rep99 Журнал (перечень) учета поступления га",
];

const Left = () => (
  <LeftPanel>
    <PanelTitle>5. Реактивы и СО</PanelTitle>
    <NavTree>
      <NavRow $indent={7}><Toggle /><Dash $w={4} /><Gap $w={2} /><Folder /><NavLabel>1. Реактивы</NavLabel></NavRow>
      <NavRow $indent={11}><Rail $gap={18} /><Rail $gap={0} /><Dash $w={9} /><Gap $w={2} /><Vials /><NavLabel>1. Объекты учета</NavLabel></NavRow>
      <NavRow $indent={11}><Rail $gap={18} /><Rail $gap={0} /><Dash $w={9} /><Box /><NavLabel>2. Партия объектов учета</NavLabel></NavRow>
      <NavRow $indent={11}><Rail $gap={18} /><Rail $gap={0} /><Dash $w={9} /><Box /><NavLabel $on>3. Партия объектов учета 2</NavLabel></NavRow>
      <NavRow $indent={11}><Rail $gap={14} /><Toggle /><Dash $w={4} /><Gap $w={2} /><Folder /><NavLabel>Отчеты</NavLabel></NavRow>
      {reports.map((t) => (
        <NavRow key={t} $indent={11}><Rail $gap={37} /><Rail $gap={0} /><Dash $w={10} /><Gap $w={3} /><Report /><NavLabel>{t}</NavLabel></NavRow>
      ))}
      <NavRow $indent={7}><Toggle plus /><Dash $w={4} /><Gap $w={2} /><Folder /><NavLabel>2. Смежные справочники</NavLabel></NavRow>
      <NavRow $indent={7}><Toggle plus /><Dash $w={4} /><Gap $w={2} /><Folder /><NavLabel>3. Стандартные образцы</NavLabel></NavRow>
    </NavTree>
    <HScroll>
      <svg width="5" height="7"><path d="M4.500 0v7L0.500 3.500z" fill="#222" /></svg>
      <HThumb><i /><i /><i /></HThumb>
      <svg width="5" height="7"><path d="M.5 0v7l4-3.500z" fill="#222" /></svg>
    </HScroll>
    <NavSplit><i /></NavSplit>
    {sections.map(([k, t]) => <NavButton key={k} $on={k === "reag"}>{sectionIcons[k]}{t}</NavButton>)}
    <NavButton $h={25}>
      <Gap $w={324} />
      <svg width="9" height="14" viewBox="0 0 9 14"><path d="M1 1l3 2.500L1 6M5 1l3 2.500L5 6" fill="none" stroke="#000" strokeWidth="1.300" /><path d="M1.500 10h6l-3 3z" /></svg>
    </NavButton>
  </LeftPanel>
);

const Filter = () => (
  <FilterBar>
    <span>С</span><Gap $w={7} />
    <Combo $w={121}>23.09.2017 20:37<DropBtn $first><Caret /></DropBtn></Combo><Gap $w={6} />
    <span>по</span><Gap $w={8} />
    <Combo $w={128}>23.09.2018 20:37<DropBtn $first><Caret /></DropBtn></Combo>
    <Divider $l={6} $r={6} />
    <Eraser /><Gap $w={8} /><Funnel /><Gap $w={2} /><Caret /><Gap $w={10} /><Refresh />
    <Divider $l={6} $r={6} />
    <Box mark="add" /><Gap $w={8} /><Box mark="move" /><Gap $w={8} /><Box mark="del" />
    <Divider $l={6} $r={6} />
    <Floppy /><Gap $w={7} /><Undo />
    <Divider $l={6} $r={6} />
    <Command $off>Расходовать</Command><Gap $w={6} /><Command $off>Распределить</Command><Gap $w={7} /><Command>Характеристики</Command><Gap $w={7} />
    <Combo $w={330}><DropBtn $first><Caret /></DropBtn><DropBtn><Cross s={8} /></DropBtn></Combo>
  </FilterBar>
);

const names = ["Газ", "Новый тип объекта учета", "Раствор реактива", "Реактив", "Стандартный образец"];

const Names = () => (
  <NameGrid>
    <HeadCell>Наименование</HeadCell>
    <Gap $w={1} style={{ height: 20 }} />
    <Band $h={4} />
    <NameRow><Gap $w={4} /><Dash $w={9} /><Box /><NameLabel $on>[Все]</NameLabel></NameRow>
    {names.map((n) => <NameRow key={n}><Toggle plus classic /><Dash $w={2} /><Book /><NameLabel>{n}</NameLabel></NameRow>)}
  </NameGrid>
);

const MainGrid = () => (
  <Grid>
    <GridBody>
      <Row>{columns.map((c) => <HeadCell key={c}>{c}</HeadCell>)}</Row>
      <Row>{columns.map((c, i) => <Cell key={c} $center={i === 9 || i === 10}>{(i === 9 || i === 10) && <Check $off><Tick c="#9a9a9a" /></Check>}</Cell>)}</Row>
      <Band $h={5} />
      {records.map((r, i) => <DataRow key={i} r={r} />)}
    </GridBody>
    <ScrollCol $top={18}>
      <ScrollBtn><Caret up /></ScrollBtn>
      <ScrollBtn $mt={168} $h={44} />
      <ScrollBtn $mt={-1}><Caret /></ScrollBtn>
    </ScrollCol>
  </Grid>
);

const props: [string, string, string][] = [
  ["Код", "Новая заявка", "link"], ["Статус", "Новая", "dots"], ["Габариты партии", "[Нет]", "clear"],
  ["Дата создания", "08.05.2018 17:47", "drop"], ["Требуемая дата готовности", "15.05.2018 17:47", "drop"],
  ["Объект учета", "D-Глюкоза чда по ГОСТ 6038", "drop"], ["Склад", "Без лаборатории", "drop"],
];

const Brackets = () => (
  <svg width="15" height="11" viewBox="0 0 15 11" shapeRendering="crispEdges"><path d="M4 .5H1.500v10H4M11 .5h2.500v10H11" fill="none" stroke="#444" /><path d="M4 5h2v2H4zM7 5h1v2H7zM9 5h2v2H9z" fill="#333" /></svg>
);

const LowerPanel = () => (
  <Lower>
    <Tabs><Tab $w={45} $on>Общие</Tab><Tab $w={91}>Характеристики</Tab><Tab $w={59}>Операции</Tab></Tabs>
    <LowerRow>
      <Group $w={249} $mt={4} $h={234}>
        <legend>Структура</legend>
        <StructTree>
          <StructRow $pl={5}>
            <Toggle classic /><Gap $w={3} />
            <svg width="16" height="16" viewBox="0 0 16 16"><path d="M0 5l5-5 3 3-5 5z" fill="#f0b82c" stroke="#9c7412" strokeWidth=".6" /><path d="M7 6h4M7 6v7h4" stroke="#667" fill="none" /><path d="M10 5l3-2 2 2-3 3z" fill="#e070c0" stroke="#8f2f78" strokeWidth=".5" /><path d="M10 12l3-3 2 3-2 3z" fill="#4a8be0" stroke="#20509c" strokeWidth=".5" /></svg>
            <StructLabel $on>Заявка № Новая заявка</StructLabel>
          </StructRow>
          {["Производители", "Поставщики"].map((t) => <StructRow key={t} $pl={23}><Toggle plus classic /><Dash $w={3} /><Brackets /><StructLabel>{t}</StructLabel></StructRow>)}
        </StructTree>
      </Group>
      <Gap $w={1} />
      <VSplit $w={4} />
      <PropsBox>
        <Group $w={1226} $mt={0} $h={229}>
          <legend>Свойства элемента</legend>
          <PropsCaption>[Заявка № Новая заявка]</PropsCaption>
          <PropsBar>
            <PropsToggle>
              <svg width="17" height="17" viewBox="0 0 17 17"><path d="M2.500 4v10.500H6M2.500 8.500H6" fill="none" stroke="#555" /><path d="M0 0h5v4H0zM5 6h5v5H5zM5 12h5v5H5z" fill="#2a6fc0" /><path d="M1 2h3M6 8.500h3M7.500 7v3M6 14.500h3M7.500 13v3" stroke="#fff" /><path d="M10.500 6.500h6v4h-6zM10.500 12.500h6v4h-6z" fill="#fff" stroke="#999" /></svg>
            </PropsToggle>
            <Divider $l={3} $r={6} />
            <svg width="15" height="15" viewBox="0 0 15 15"><circle cx="7.500" cy="7.500" r="6.600" fill="#f3f7ff" stroke="#4a70d0" strokeWidth="1.200" /><path d="M7.500 3v2M7.500 6.500V12M6 6.800h1.500M5.800 11.700h3.500" stroke="#2148b8" strokeWidth="1.500" /></svg>
          </PropsBar>
          <PropsGrid>
            <PropsTable>
              <Category><Expander style={{ width: 11, height: 11 }}><PlusMinus /></Expander>1.Общие</Category>
              {props.map(([n, v, k]) => (
                <Prop key={n}>
                  <PropName>{n}</PropName>
                  <PropValue>
                    <span>{v}</span>
                    {k === "clear" && <PropBtn><Caret /></PropBtn>}
                    <PropBtn>
                      {k === "link" && <svg width="8" height="8" viewBox="0 0 8 8"><path d="M1.500 7.500V3h4M1 7.200h3.800V6" fill="none" stroke="#000" strokeWidth="1.200" /><path d="M4.500 0l3.500 3-3.500 3z" /></svg>}
                      {k === "dots" && <svg width="10" height="2" shapeRendering="crispEdges"><path d="M0 0h2v2H0zM4 0h2v2H4zM8 0h2v2H8z" /></svg>}
                      {k === "clear" && <Cross s={8} />}
                      {k === "drop" && <Caret />}
                    </PropBtn>
                  </PropValue>
                </Prop>
              ))}
            </PropsTable>
            <ScrollCol $top={0}>
              <ScrollBtn><Caret up /></ScrollBtn><ScrollBtn $h={86} /><ScrollBtn $mt={-1}><Caret /></ScrollBtn>
            </ScrollCol>
          </PropsGrid>
        </Group>
      </PropsBox>
    </LowerRow>
  </Lower>
);

/* ---------- task bar icons ---------- */
const T = ({ s = 30, children }: { s?: number; children: React.ReactNode }) => <svg width={s} height={s} viewBox="0 0 30 30">{children}</svg>;
const Orb = () => (
  <svg width="38" height="38" viewBox="0 0 38 38">
    <defs><radialGradient id="orb" cx=".5" cy=".95" r=".9"><stop offset="0" stopColor="#49d6f8" /><stop offset=".45" stopColor="#1474ae" /><stop offset=".8" stopColor="#143f68" /><stop offset="1" stopColor="#4d7899" /></radialGradient></defs>
    <circle cx="19" cy="19" r="18" fill="url(#orb)" stroke="#9db7c8" />
    <path d="M3 16a16.500 16.500 0 0132 0c-9 4-23 4-32 0z" fill="#ffffff55" />
    <path d="M11 10c3-2 5-1.500 8-.3L17.500 18c-3-1.200-5-1.200-8 .3z" fill="#f2672b" /><path d="M20.300 10.200c3 1.200 5.500 1.300 8.700-.4L27.500 18.200c-3 1.700-5.700 1.500-8.700.2z" fill="#8cc63e" />
    <path d="M9.200 19.600c3-1.500 5-1.500 8-.3L15.700 27.500c-3-1.200-5-1.200-8 .3z" fill="#54a8e8" /><path d="M18.500 19.800c3 1.300 5.500 1.400 8.700-.3l-1.500 8.300c-3 1.700-5.700 1.500-8.700.3z" fill="#fcc72e" />
  </svg>
);
const IE = () => (
  <T><path d="M28.500 17.500H11c.3 5.500 7.500 6.500 9.500 2.500h7.500C25 32 4 32 4 16.500 4 1 28.500 0 28.500 17.500zM11 13h10.500c-.8-5.500-9.700-5.500-10.500 0z" fill="#5bc8f4" stroke="#1d84bd" strokeWidth=".6" fillRule="evenodd" /><path d="M4 29C-3 27 8 8 20 2.500c6-2.500 10.500-1 8 6 0-4-3-4.500-7-2.500C11 11 3 21.500 3.500 25.500c0 1.800 1.600 2 3.500 1.300C6.300 28 5.500 29.200 4 29z" fill="#fbc620" stroke="#c78a10" strokeWidth=".4" /></T>
);
const Chrome = () => (
  <T><circle cx="15" cy="15" r="15" fill="#fbc926" /><path d="M2 7.500A15 15 0 0128.500 8.500H15L9 18z" fill="#dd4a3c" /><path d="M2 7.500L9 19l6 3-3.500 7.600A15 15 0 012 7.500z" fill="#1ba05b" /><circle cx="15" cy="15" r="6.800" fill="#fff" /><circle cx="15" cy="15" r="5.500" fill="#4a8af4" /></T>
);
const Firefox = () => (
  <T><circle cx="15" cy="16" r="13.800" fill="#2a4fa8" /><path d="M20 1c7 4 11 12 9 18-2 7-8 11-15 11S0 24 .5 15C.7 10 2 6 4 3.500c0 2 .5 3 1.500 4C8 5 11 5.500 13.500 7c-1 1-3 2-3 4 1 2 5 .5 5 3-2 .5-3 3-6 2 1 4 6 6 10 3.500 5-3 4-9 1.500-12 .3-2.500-1.500-4 -1-6.500z" fill="#ff8a16" /><path d="M20 1c7 4 11 12 9 18-2 6-6 9-10 10 4-4 6-9 4.500-14-.8-3-3-5-4.200-7.500C18.700 5 19 3 20 1z" fill="#ffd32a" /><path d="M.5 15c.2-5 1.500-9 3.500-11.500 0 3 .5 4 1 6-1 8 2 16 12 20C8 31 0 25 .5 15z" fill="#e8233a" /></T>
);
const Racks = () => (
  <svg width="30" height="30" viewBox="0 0 30 30" shapeRendering="crispEdges"><path d="M0 0h30v26H0z" fill="#0000c8" /><path d="M.5.500h29v25H.500zM10.500 0v22M15.500 0v22M25.500 0v22M0 21.500h30M20 0" fill="none" stroke="#19e8f0" /><path d="M2 5.500h7M2 8.500h7M2 11.500h7M2 14.500h7M17 5.500h6M17 8.500h6M12 5.500h2M12 8.500h2M12 11.500h2M27 5.500h2M27 8.500h2M2 23.500h5M17 23.500h5" stroke="#19e8f0" /><path d="M4 2.500h3M19 2.500h3" stroke="#f0f040" /><path d="M0 27h30v3H0z" fill="#0c4e52" /><path d="M0 28.500h30" stroke="#000" strokeDasharray="1 4" strokeWidth="3" /></svg>
);
const Paint = () => (
  <T><path d="M1 17C0 9 9 5 16 5.500c7 .5 12 4 11 11-1 6-6 9-11 10-2 .5-3-1-3-3-1-2-4 0-6 1C3 25 1 21 1 17z" fill="#dcecf8" stroke="#7fa3c0" strokeWidth=".8" /><circle cx="6" cy="16.500" r="2.600" fill="#e2483a" /><circle cx="11" cy="11.500" r="2.600" fill="#46b04a" /><circle cx="17" cy="9.500" r="2.800" fill="#f4a72c" /><circle cx="13" cy="18.500" r="2" fill="#49565e" /><path d="M24.500 7l2.500 1.300L17 30l-1-.3z" fill="#f09a34" stroke="#b66512" strokeWidth=".5" /><path d="M23.500 3l6-3v7l-3 3-3-2z" fill="#b08a60" /></T>
);
const Snip = () => (
  <T><ellipse cx="12" cy="12" rx="11.500" ry="8" transform="rotate(-15 12 12)" fill="#c9a5ab66" stroke="#a8606c" strokeWidth=".8" /><ellipse cx="13" cy="8" rx="11" ry="6.500" transform="rotate(-12 13 8)" fill="#fff" stroke="#d9262e" strokeWidth="2" /><path d="M5 6l15 14M12 4l5 19" stroke="#98a2aa" strokeWidth="2.200" /><ellipse cx="24.500" cy="21" rx="2.500" ry="5" transform="rotate(-50 24.500 21)" fill="none" stroke="#2a97d8" strokeWidth="2.200" /><ellipse cx="17.500" cy="25.500" rx="2.400" ry="4.300" transform="rotate(5 17.500 25.500)" fill="none" stroke="#2a97d8" strokeWidth="2.200" /></T>
);
const GearFlask = ({ s = 22 }: { s?: number }) => (
  <T s={s}><circle cx="13" cy="12" r="7.500" fill="none" stroke="#8a8eba" strokeWidth="4.500" /><circle cx="13" cy="12" r="10.500" fill="none" stroke="#8a8eba" strokeWidth="3" strokeDasharray="4.100 4.100" /><circle cx="13" cy="12" r="3" fill="#8a8eba" /><path d="M18 14h7M19.500 14v6L14 29.500h15L24 20v-6" fill="#f6ecec" stroke="#9c2a24" strokeWidth="1.500" /><path d="M18.500 23h6.500l3 6H15.500z" fill="#a8443a" /></T>
);
const Word = () => (
  <T><path d="M4 1h24v27H1V4z" fill="#f4f8fd" stroke="#2b5fae" strokeWidth="1.300" /><path d="M7 5l2.500 14h2L14.500 8l2.500 11h2L23 5M5 4.500h6M12.500 4.500h5M20 4.500h5" fill="none" stroke="#1f5bb5" strokeWidth="2.700" /><path d="M12 22l13-5 5 3-2 9H9z" fill="#e3e9f0" /><path d="M13 24l12-4M12 27l14-5" stroke="#9fb2c8" /></T>
);

const Task = () => (
  <TaskBar>
    <Slot $h={56}><Orb /></Slot>
    <Gap $w={1} style={{ height: 3 }} />
    <Dots />
    <Gap $w={1} style={{ height: 7 }} />
    <Slot $h={47}><IE /></Slot>
    <Slot $open><Chrome /></Slot>
    <Slot><Firefox /></Slot>
    <Slot $open><Racks /></Slot>
    <Slot $open><Paint /></Slot>
    <Slot><Snip /></Slot>
    <Slot $open $active><GearFlask /></Slot>
    <Slot $open><Word /></Slot>
    <Gap $w={1} style={{ height: 550 }} />
    <Dots />
    <Gap $w={1} style={{ height: 7 }} />
    <TrayText $h={20} $shift={4}>EN</TrayText>
    <Gap $w={1} style={{ height: 1 }} />
    <TrayArrow><svg width="5" height="8"><path d="M5 0v8L0 4z" fill="#fff" /></svg></TrayArrow>
    <Tray>
      <svg width="16" height="16" viewBox="0 0 16 16"><circle cx="7" cy="7" r="6.500" fill="#0c9ba6" /><circle cx="7" cy="7" r="3.500" fill="none" stroke="#fff" strokeWidth="1.500" /><path d="M4 7h6" stroke="#fff" strokeWidth="1.300" /><circle cx="12" cy="12" r="4" fill="#2a8fdc" /><path d="M12 9.500v1.200M12 11.500v3" stroke="#fff" strokeWidth="1.200" /></svg>
      <svg width="16" height="16" viewBox="0 0 16 16"><path d="M.7.700h14.600v14.600H.700z" fill="#2c9d2c" stroke="#d4e9d4" strokeWidth="1.300" /><path d="M5 13V4v4c0 3 5 3 5 0V4v4c0 1.500.5 2 2 2" fill="none" stroke="#fff" strokeWidth="1.900" /></svg>
      <svg width="16" height="16" viewBox="0 0 16 16"><circle cx="5" cy="5" r="4.500" fill="#18a3e8" /><circle cx="11" cy="11" r="4.500" fill="#18a3e8" /><circle cx="8" cy="8" r="6.600" fill="#18a3e8" /><path d="M10.500 5.500C9 4 5.500 4.300 5.700 6.300c.2 2 5 1.200 4.900 3.500-.1 2-3.800 2.200-5.200.500" fill="none" stroke="#fff" strokeWidth="1.600" /></svg>
      <svg width="16" height="16" viewBox="0 0 16 16"><path d="M1.500 1v14" stroke="#fff" strokeWidth="1.200" /><path d="M3 2c3-2 4 2 9 0v7c-4 2-6-2-9 0z" fill="#fff" /><circle cx="11" cy="11" r="4.500" fill="#d8322a" /><path d="M9 9l4 4M13 9l-4 4" stroke="#fff" strokeWidth="1.400" /></svg>
      <svg width="16" height="16" viewBox="0 0 16 16"><path d="M1 5.500h2.500L7 1.500v13L3.500 10.500H1z" fill="#fff" /><path d="M9 5.500c1.300 1.500 1.300 3.500 0 5M11.500 3.500c2.400 2.700 2.400 6.300 0 9" fill="none" stroke="#ddd" strokeWidth="1.100" /></svg>
      <svg width="16" height="16" viewBox="0 0 16 16"><path d="M5.500 3.500H15V11H5.500z" fill="#111a22" stroke="#fff" strokeWidth="1.300" /><path d="M8 13.500h6M10.500 11v2M1.500 1v3h3V1M3 4v9h3" fill="none" stroke="#fff" strokeWidth="1.300" /></svg>
    </Tray>
    <TrayText $h={18} $shift={2}>20:38</TrayText>
    <TrayText $h={16}>23.09.2018</TrayText>
    <ShowDesktop />
  </TaskBar>
);

export default function App() {
  return (
    <Desktop>
      <Global />
      <Window>
        <TitleBar>
          <TitleText>
            <svg width="16" height="16" viewBox="0 0 16 16"><path d="M.8.800h14.400v14.400H.8z" fill="#fbe9e9" stroke="#a01c24" strokeWidth="1.500" /><path d="M5.500 3h5M6.500 3v4L3.500 12.500h9L9.500 7V3" fill="#fff" stroke="#a01c24" strokeWidth=".9" /><path d="M5 10h6l1.300 2.500H3.700z" fill="#a01c24" /></svg>
            I-LDS: АРМ инженера - Лысков Евгений Николаевич [Специалист Индасофт] (Лаборант - Вода, СПЛ)
          </TitleText>
          <CaptionButtons>
            <CaptionButton $w={28}><svg width="12" height="5"><path d="M.5.500h11v3.500H.5z" fill="#fff" stroke="#56606b" /></svg></CaptionButton>
            <CaptionButton $w={27}><svg width="12" height="12"><path d="M3.500.500h8v8h-8z" fill="#fff" stroke="#56606b" /><path d="M.5 2.500h8v9h-8z" fill="#fff" stroke="#56606b" /><path d="M3 5.500h3V9H3z" fill="#9cb4cd" stroke="#56606b" /></svg></CaptionButton>
            <CaptionButton $w={47} $close><svg width="11" height="10" viewBox="0 0 11 10"><path d="M2 1.500l7 7M9 1.500l-7 7" stroke="#5b3636" strokeWidth="4" /><path d="M2 1.500l7 7M9 1.500l-7 7" stroke="#fff" strokeWidth="2.400" /></svg></CaptionButton>
          </CaptionButtons>
        </TitleBar>
        <MenuBar>
          <MenuItems>{["Файл", "Вид", "Перейти", "Сервис", "Действия", "Справка"].map((t) => <MenuEntry key={t} t={t} />)}</MenuItems>
          <Overflow $h={22}><OverflowMark /></Overflow>
        </MenuBar>
        <StripRow>
          <Strip $w={289}>
            <Grip /><Key gray /><Gap $w={6} /><Key />
            <StripLabel>Сменить пользователя...</StripLabel>
            <PreviewIcon /><Divider $l={5} $r={8} /><PrinterIcon /><Gap $w={8} /><SaveAllIcon />
            <Overflow><OverflowMark /></Overflow>
          </Strip>
          <Strip $w={94}><Grip /><InOut /><Gap $w={9} /><InOut up /><Gap $w={9} /><FindIcon /><Overflow><OverflowMark /></Overflow></Strip>
        </StripRow>
        <Body>
          <Left />
          <VSplit $w={4} />
          <MainPanel>
            <Banner>
              <div><h1>5. Реактивы и СО</h1><p>» 1. Реактивы » 3. Партия объектов учета 2</p></div>
              <Flask w={10} h={32} />
            </Banner>
            <Filter />
            <Upper><Names /><VSplit $w={5} /><MainGrid /></Upper>
            <HSplit />
            <LowerPanel />
          </MainPanel>
        </Body>
        <StatusBar>
          <StatusPane $w={1709} />
          <StatusPane $w={75}>Лысков Е.Н.</StatusPane>
          <StatusPane $w={27}><svg width="16" height="15" viewBox="0 0 16 15"><path d="M8 1l7.300 13H.7z" fill="#ffe21f" stroke="#a38a00" /><path d="M8 5v5M8 11v2" stroke="#222" strokeWidth="1.800" /></svg></StatusPane>
          <StatusPane $w={27}><svg width="16" height="16" viewBox="0 0 16 16"><path d="M6 1h9v8H6z" fill="#3a3f9a" stroke="#8a8fb0" /><path d="M9 9h5v2H9z" fill="#999fb8" /><path d="M1 5h8v7H1z" fill="#5259b8" stroke="#8a8fb0" /><path d="M3 12h5v2H2z" fill="#999fb8" /></svg></StatusPane>
        </StatusBar>
      </Window>
      <Task />
    </Desktop>
  );
}
